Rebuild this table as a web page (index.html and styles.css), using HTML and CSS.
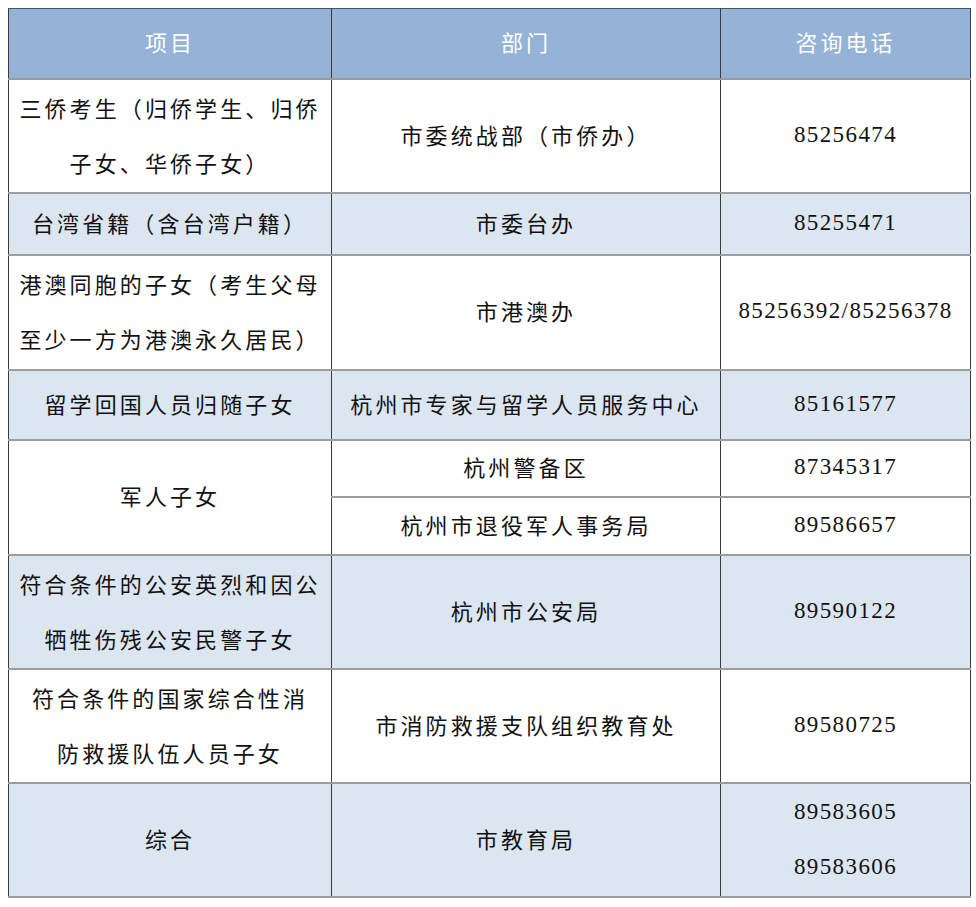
FILE: index.html
```html
<!DOCTYPE html>
<html lang="zh-CN">
<head>
<meta charset="utf-8">
<title>咨询电话</title>
<link rel="stylesheet" href="styles.css">
</head>
<body>
<table class="info">
  <colgroup>
    <col class="c1"><col class="c2"><col class="c3">
  </colgroup>
  <thead>
    <tr class="h-head">
      <th>项目</th>
      <th>部门</th>
      <th>咨询电话</th>
    </tr>
  </thead>
  <tbody>
    <tr class="h-tall">
      <td class="cn two">三侨考生（归侨学生、归侨<br>子女、华侨子女）</td>
      <td class="cn">市委统战部（市侨办）</td>
      <td class="num" lang="en">85256474</td>
    </tr>
    <tr class="alt h-62">
      <td class="cn">台湾省籍（含台湾户籍）</td>
      <td class="cn">市委台办</td>
      <td class="num" lang="en">85255471</td>
    </tr>
    <tr class="h-115">
      <td class="cn two">港澳同胞的子女（考生父母<br>至少一方为港澳永久居民）</td>
      <td class="cn">市港澳办</td>
      <td class="num" lang="en">85256392/85256378</td>
    </tr>
    <tr class="alt h-70">
      <td class="cn">留学回国人员归随子女</td>
      <td class="cn">杭州市专家与留学人员服务中心</td>
      <td class="num" lang="en">85161577</td>
    </tr>
    <tr class="h-57">
      <td class="cn" rowspan="2">军人子女</td>
      <td class="cn">杭州警备区</td>
      <td class="num" lang="en">87345317</td>
    </tr>
    <tr class="h-58">
      <td class="cn">杭州市退役军人事务局</td>
      <td class="num" lang="en">89586657</td>
    </tr>
    <tr class="alt h-tall">
      <td class="cn two">符合条件的公安英烈和因公<br>牺牲伤残公安民警子女</td>
      <td class="cn">杭州市公安局</td>
      <td class="num" lang="en">89590122</td>
    </tr>
    <tr class="h-tall">
      <td class="cn two">符合条件的国家综合性消<br>防救援队伍人员子女</td>
      <td class="cn">市消防救援支队组织教育处</td>
      <td class="num" lang="en">89580725</td>
    </tr>
    <tr class="alt h-tall">
      <td class="cn">综合</td>
      <td class="cn">市教育局</td>
      <td class="num two" lang="en">89583605<br>89583606</td>
    </tr>
  </tbody>
</table>
</body>
</html>
```

FILE: styles.css
```css
html, body {
  margin: 0;
  padding: 0;
  background: #ffffff;
}

body {
  padding: 8px 0 0 8px;
}

.info {
  border-collapse: collapse;
  table-layout: fixed;
  width: 962px;
  color: #111111;
  font-family: "Noto Sans CJK SC", "Noto Sans", sans-serif;
}

.c1 { width: 323px; }
.c2 { width: 389px; }
.c3 { width: 250px; }

.info th,
.info td {
  padding: 0 0 4px 0;
  text-align: center;
  vertical-align: middle;
  border-left: 1px solid #3a3a3a;
  border-right: 1px solid #3a3a3a;
  border-top: 2px solid #9c9c9c;
  border-bottom: 2px solid #9c9c9c;
  white-space: nowrap;
}

.info th {
  background: #95b3d7;
  color: #ffffff;
  font-weight: normal;
  font-size: 22px;
  letter-spacing: 3px;
  border-top: 1px solid #46546a;
}

.h-head { height: 70px; }
.h-tall { height: 114px; }
.h-62 { height: 62px; }
.h-115 { height: 115px; }
.h-70 { height: 70px; }
.h-57 { height: 57px; }
.h-58 { height: 58px; }

.alt td {
  background: #dce6f1;
}

.cn {
  font-size: 22px;
  letter-spacing: 3.1px;
  line-height: 30px;
}

.info td.cn.two {
  line-height: 55px;
  padding-bottom: 2px;
}

.info td.num {
  font-family: "Liberation Serif", "DejaVu Serif", serif;
  font-size: 23px;
  letter-spacing: 1.4px;
  line-height: 30px;
  padding-bottom: 2px;
}

.info td.num.two {
  line-height: 55px;
}
```
